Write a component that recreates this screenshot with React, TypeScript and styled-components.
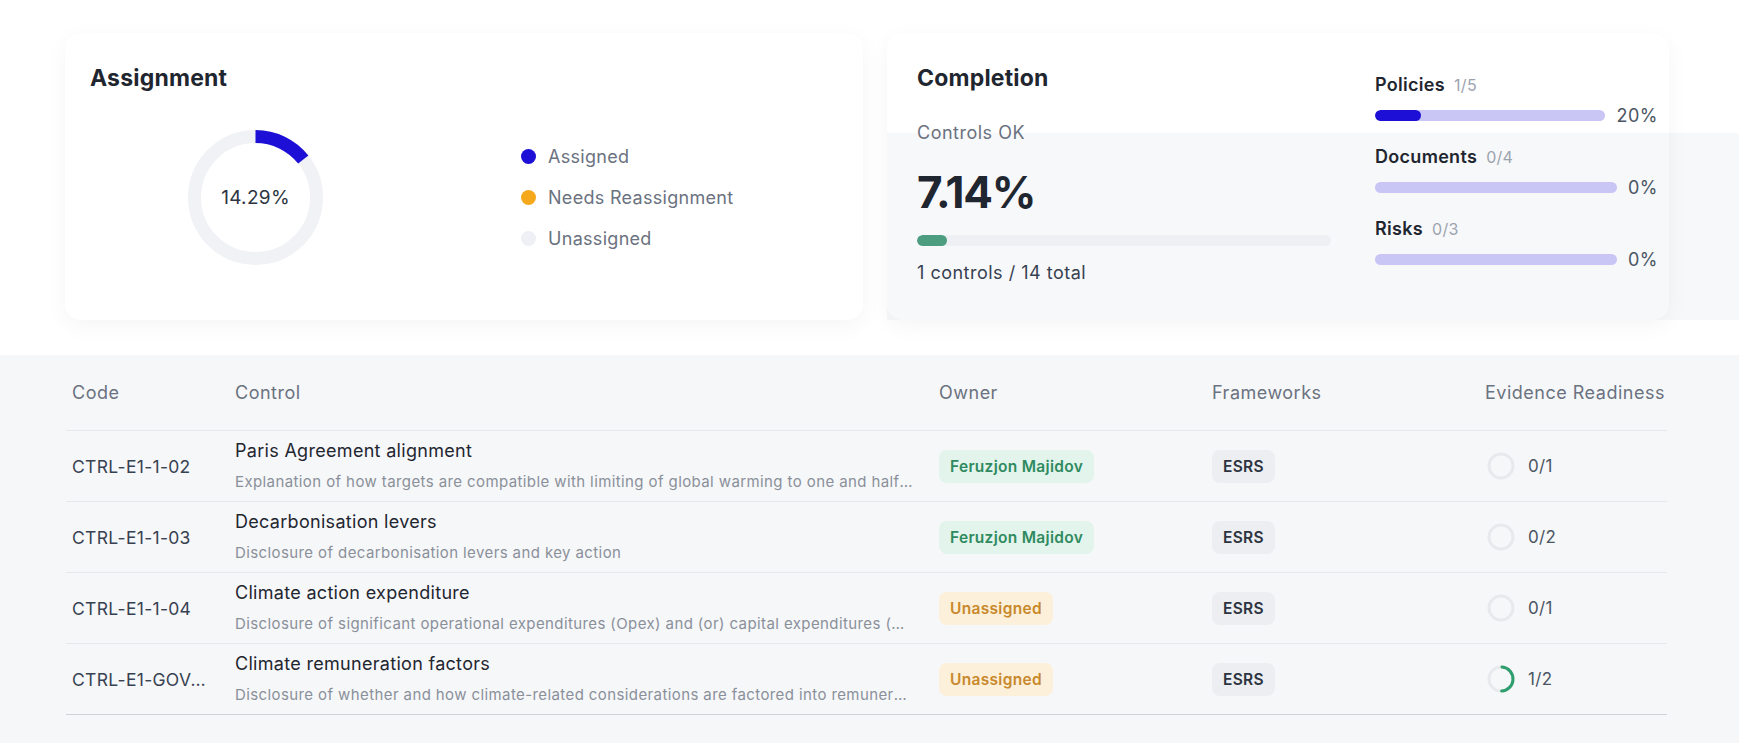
import React from "react";
import styled, { createGlobalStyle } from "styled-components";

const GlobalStyle = createGlobalStyle`
  * { box-sizing: border-box; }
  body {
    margin: 0;
    background: #fff;
    font-family: Inter, "Noto Sans", sans-serif;
    color: #1f2937;
  }
`;

const Page = styled.div`
  min-height: 743px;
  display: flex;
  flex-direction: column;
`;

const TopRow = styled.div`
  display: grid;
  grid-template-columns: 798px 782px;
  gap: 24px;
  padding: 33px 0 0 65px;
  height: 320px;
  background: linear-gradient(#f7f8fa, #f7f8fa) no-repeat right 0 top 133px /
    calc(100% - 887px) 187px;
`;

const Card = styled.section`
  background: #fff;
  border-radius: 16px;
  box-shadow: 0 6px 22px rgba(17, 24, 39, 0.045);
  padding: 30px 25px 0;
`;

const CardTitle = styled.h2`
  margin: 0;
  font-size: 23px;
  line-height: 30px;
  font-weight: 700;
  letter-spacing: 0.2px;
  color: #1f2630;
`;

/* assignment donut + legend */
const AssignmentBody = styled.div`
  display: flex;
  align-items: center;
  gap: 198px;
  margin-top: 37px;
  padding-left: 98px;
`;

const DonutWrap = styled.div`
  position: relative;
  width: 135px;
  height: 135px;
`;

const DonutLabel = styled.span`
  position: absolute;
  inset: 0;
  display: flex;
  align-items: center;
  justify-content: center;
  font-size: 19px;
  letter-spacing: 0.3px;
  color: #2d3440;
`;

const Legend = styled.ul`
  list-style: none;
  margin: 0;
  padding: 0;
  display: flex;
  flex-direction: column;
  gap: 17px;
`;

const LegendItem = styled.li`
  display: flex;
  align-items: center;
  gap: 12px;
  font-size: 18px;
  line-height: 24px;
  letter-spacing: 0.3px;
  color: #6b7280;
`;

const Dot = styled.span<{ $color: string }>`
  width: 15px;
  height: 15px;
  border-radius: 50%;
  background: ${(p) => p.$color};
`;

/* completion card */
const CompletionCard = styled(Card)`
  display: grid;
  grid-template-columns: 414px 1fr;
  column-gap: 44px;
  padding: 30px 11px 0 30px;
  background: linear-gradient(#fff 0 100px, #f7f8fa 100px);
`;

const Column = styled.div`
  display: flex;
  flex-direction: column;
`;

const Muted = styled.div`
  margin-top: 29px;
  font-size: 18px;
  line-height: 22px;
  letter-spacing: 0.5px;
  color: #6b7280;
`;

const BigNumber = styled.div`
  margin-top: 23px;
  font-size: 44px;
  line-height: 50px;
  font-weight: 700;
  letter-spacing: -1.2px;
  color: #1f2630;
`;

const Track = styled.div<{ $bg: string; $h?: number }>`
  height: ${(p) => p.$h ?? 11}px;
  border-radius: 999px;
  background: ${(p) => p.$bg};
  overflow: hidden;
`;

const Fill = styled.div<{ $color: string }>`
  height: 100%;
  border-radius: 999px;
  background: ${(p) => p.$color};
`;

const ControlsTrack = styled(Track)`
  margin-top: 18px;
`;

const Caption = styled.div`
  margin-top: 16px;
  font-size: 18px;
  line-height: 22px;
  letter-spacing: 0.5px;
  color: #374151;
`;

const ResourceList = styled.div`
  display: flex;
  flex-direction: column;
  gap: 20px;
  padding-top: 11px;
`;

const Resource = styled.div`
  display: flex;
  flex-direction: column;
  gap: 8px;
`;

const ResourceLabel = styled.div`
  font-size: 18px;
  line-height: 22px;
  font-weight: 600;
  letter-spacing: 0.3px;
  color: #1f2630;

  span {
    margin-left: 9px;
    font-weight: 400;
    font-size: 16px;
    color: #9ca3af;
  }
`;

const ResourceBar = styled.div`
  display: flex;
  align-items: center;
  gap: 11px;
  height: 22px;

  & > div:first-child {
    flex: 1;
  }
`;

const Percent = styled.span`
  font-size: 18px;
  letter-spacing: 0.5px;
  color: #4b5563;
`;

/* controls table */
const TableSection = styled.section`
  flex: 1;
  margin-top: 35px;
  background: #f6f7f9;
  padding: 0 72px 28px 66px;
`;

const Grid = styled.div`
  display: grid;
  grid-template-columns: 163px 704px 273px 273px 1fr;
  align-items: center;
`;

const HeaderRow = styled(Grid)`
  height: 76px;
  border-bottom: 1px solid #e6e8ec;
`;

const Row = styled(Grid)<{ $last?: boolean }>`
  height: 71px;
  border-bottom: 1px solid ${(p) => (p.$last ? "#cfd3d9" : "#e6e8ec")};
`;

const HeadCell = styled.div`
  padding-left: 6px;
  font-size: 18px;
  letter-spacing: 0.5px;
  color: #6b7280;
  white-space: nowrap;
`;

const Cell = styled.div`
  padding: 0 20px 0 6px;
  min-width: 0;
`;

const Code = styled(Cell)`
  font-size: 17.5px;
  letter-spacing: 0.3px;
  color: #374151;
  white-space: nowrap;
  overflow: hidden;
  text-overflow: ellipsis;
`;

const ControlCell = styled(Cell)`
  display: flex;
  flex-direction: column;
  gap: 8px;
`;

const ControlTitle = styled.div`
  font-size: 18px;
  line-height: 24px;
  letter-spacing: 0.3px;
  color: #1f2630;
`;

const ControlDesc = styled.div`
  font-size: 15px;
  line-height: 22px;
  letter-spacing: 0.4px;
  color: #8a9099;
  white-space: nowrap;
  overflow: hidden;
  text-overflow: ellipsis;
`;

const tones = {
  green: { bg: "#e2f4eb", fg: "#2f8a5f" },
  amber: { bg: "#fdf0da", fg: "#c8892c" },
  gray: { bg: "#eceef1", fg: "#2d3440" },
};

const Badge = styled.span<{ $tone: keyof typeof tones }>`
  display: inline-flex;
  align-items: center;
  height: 33px;
  padding: 0 11px;
  border-radius: 8px;
  font-size: 15.5px;
  font-weight: 600;
  letter-spacing: 0.3px;
  background: ${(p) => tones[p.$tone].bg};
  color: ${(p) => tones[p.$tone].fg};
`;

const Evidence = styled.div`
  display: flex;
  align-items: center;
  gap: 13px;
  padding-left: 8px;
  font-size: 17px;
  letter-spacing: 0.3px;
  color: #4b5563;
`;

const Donut = ({ value }: { value: number }) => {
  const r = 61;
  const c = 2 * Math.PI * r;
  return (
    <DonutWrap>
      <svg width="135" height="135" viewBox="0 0 135 135">
        <circle cx="67.5" cy="67.5" r={r} fill="none" stroke="#f1f2f6" strokeWidth="13" />
        <circle
          cx="67.5"
          cy="67.5"
          r={r}
          fill="none"
          stroke="#1d0fd6"
          strokeWidth="13"
          strokeDasharray={`${(c * value) / 100} ${c}`}
          transform="rotate(-90 67.5 67.5)"
        />
      </svg>
      <DonutLabel>{value.toFixed(2)}%</DonutLabel>
    </DonutWrap>
  );
};

const Ring = ({ done, total }: { done: number; total: number }) => {
  const r = 12;
  const c = 2 * Math.PI * r;
  return (
    <svg width="28" height="28" viewBox="0 0 28 28">
      <circle cx="14" cy="14" r={r} fill="none" stroke="#e7e9ec" strokeWidth="3" />
      {done > 0 && (
        <circle
          cx="14"
          cy="14"
          r={r}
          fill="none"
          stroke="#2e9e6e"
          strokeWidth="3"
          strokeLinecap="round"
          strokeDasharray={`${(c * done) / total - 2} ${c}`}
          transform="rotate(-85 14 14)"
        />
      )}
    </svg>
  );
};

const resources = [
  { name: "Policies", done: 1, total: 5 },
  { name: "Documents", done: 0, total: 4 },
  { name: "Risks", done: 0, total: 3 },
];

const controls = [
  {
    code: "CTRL-E1-1-02",
    title: "Paris Agreement alignment",
    desc: "Explanation of how targets are compatible with limiting of global warming to one and half degrees Celsius in line with the Paris Agreement",
    owner: "Feruzjon Majidov",
    evidence: [0, 1],
  },
  {
    code: "CTRL-E1-1-03",
    title: "Decarbonisation levers",
    desc: "Disclosure of decarbonisation levers and key action",
    owner: "Feruzjon Majidov",
    evidence: [0, 2],
  },
  {
    code: "CTRL-E1-1-04",
    title: "Climate action expenditure",
    desc: "Disclosure of significant operational expenditures (Opex) and (or) capital expenditures (CapEx) required to implement the transition plan",
    owner: null,
    evidence: [0, 1],
  },
  {
    code: "CTRL-E1-GOV-3-01",
    title: "Climate remuneration factors",
    desc: "Disclosure of whether and how climate-related considerations are factored into remuneration of members of the administrative bodies",
    owner: null,
    evidence: [1, 2],
  },
];

const App = () => {
  return (
    <Page>
      <GlobalStyle />
      <TopRow>
        <Card>
          <CardTitle>Assignment</CardTitle>
          <AssignmentBody>
            <Donut value={14.29} />
            <Legend>
              <LegendItem>
                <Dot $color="#1d0fd6" />
                Assigned
              </LegendItem>
              <LegendItem>
                <Dot $color="#f5a81c" />
                Needs Reassignment
              </LegendItem>
              <LegendItem>
                <Dot $color="#eef0f5" />
                Unassigned
              </LegendItem>
            </Legend>
          </AssignmentBody>
        </Card>

        <CompletionCard>
          <Column>
            <CardTitle>Completion</CardTitle>
            <Muted>Controls OK</Muted>
            <BigNumber>7.14%</BigNumber>
            <ControlsTrack $bg="#eef0f3">
              <Fill $color="#4d9e80" style={{ width: "7.14%" }} />
            </ControlsTrack>
            <Caption>1 controls / 14 total</Caption>
          </Column>
          <ResourceList>
            {resources.map((r) => {
              const pct = Math.round((r.done / r.total) * 100);
              return (
                <Resource key={r.name}>
                  <ResourceLabel>
                    {r.name}
                    <span>
                      {r.done}/{r.total}
                    </span>
                  </ResourceLabel>
                  <ResourceBar>
                    <Track $bg="#c9c5f5">
                      <Fill $color="#1d0fd6" style={{ width: `${pct}%` }} />
                    </Track>
                    <Percent>{pct}%</Percent>
                  </ResourceBar>
                </Resource>
              );
            })}
          </ResourceList>
        </CompletionCard>
      </TopRow>

      <TableSection>
        <HeaderRow>
          <HeadCell>Code</HeadCell>
          <HeadCell>Control</HeadCell>
          <HeadCell>Owner</HeadCell>
          <HeadCell>Frameworks</HeadCell>
          <HeadCell>Evidence Readiness</HeadCell>
        </HeaderRow>
        {controls.map((c, i) => (
          <Row key={c.code} $last={i === controls.length - 1}>
            <Code>{c.code}</Code>
            <ControlCell>
              <ControlTitle>{c.title}</ControlTitle>
              <ControlDesc>{c.desc}</ControlDesc>
            </ControlCell>
            <Cell>
              {c.owner ? (
                <Badge $tone="green">{c.owner}</Badge>
              ) : (
                <Badge $tone="amber">Unassigned</Badge>
              )}
            </Cell>
            <Cell>
              <Badge $tone="gray">ESRS</Badge>
            </Cell>
            <Evidence>
              <Ring done={c.evidence[0]} total={c.evidence[1]} />
              {c.evidence[0]}/{c.evidence[1]}
            </Evidence>
          </Row>
        ))}
      </TableSection>
    </Page>
  );
};

export default App;
